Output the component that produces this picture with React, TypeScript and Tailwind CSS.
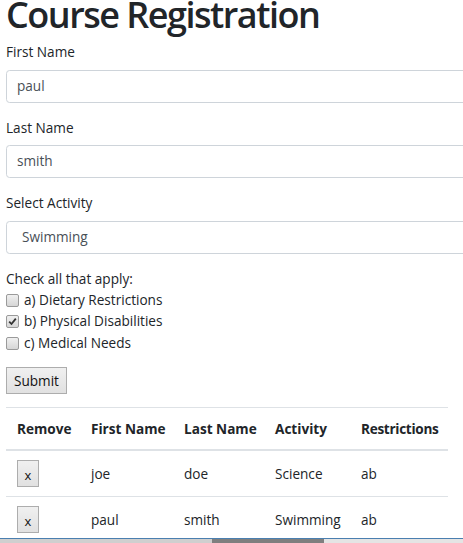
import React from 'react';

const rows = [
  { first: 'joe', last: 'doe', activity: 'Science', restrictions: 'ab' },
  { first: 'paul', last: 'smith', activity: 'Swimming', restrictions: 'ab' },
];

const options = [
  { label: 'a) Dietary Restrictions', checked: false },
  { label: 'b) Physical Disabilities', checked: true },
  { label: 'c) Medical Needs', checked: false },
];

function Box({ checked }: { checked: boolean }) {
  return (
    <span className="w-[13px] h-[13px] border border-[#9a9a9a] rounded-[2px] bg-gradient-to-b from-[#f0f0f0] to-[#d6d6d6] flex items-center justify-center shrink-0">
      {checked && (
        <svg width="9" height="9" viewBox="0 0 9 9">
          <path d="M1.2 4.6 L3.5 7 L7.8 1.6" fill="none" stroke="#333" strokeWidth="1.8" />
        </svg>
      )}
    </span>
  );
}

function Field({ label, value, select }: { label: string; value: string; select?: boolean }) {
  return (
    <div className="mb-[14px]">
      <div className="mb-[7px] leading-[21.6px]">{label}</div>
      <div
        className={
          'w-[520px] h-[33px] border border-[#ced4da] rounded-[3.6px] flex items-center text-[#495057] bg-white ' +
          (select ? 'pl-[15px]' : 'pl-[10px]')
        }
      >
        {value}
      </div>
    </div>
  );
}

export default function App() {
  return (
    <div
      className="relative w-[463px] h-[543px] overflow-hidden bg-white text-[#212529] text-[13.6px]"
      style={{ fontFamily: '"Open Sans", "Noto Sans", sans-serif' }}
    >
      <div className="pl-[6px]">
        <h1 className="text-[36px] font-semibold tracking-[-1.5px] leading-[43px] mt-[-7px] mb-[5px] whitespace-nowrap">
          Course Registration
        </h1>

        <Field label="First Name" value="paul" />
        <Field label="Last Name" value="smith" />
        <Field label="Select Activity" value="Swimming" select />

        <div className="mb-[13px]">
          <div className="leading-[21.6px]">Check all that apply:</div>
          {options.map(o => (
            <div key={o.label} className="flex items-center gap-[5px] h-[21.5px]">
              <Box checked={o.checked} />
              <span>{o.label}</span>
            </div>
          ))}
        </div>

        <button className="h-[27px] px-[7px] border border-[#adadad] bg-gradient-to-b from-[#f0f0f0] to-[#e1e1e1] text-[#111] leading-none mb-[13px]">
          Submit
        </button>

        <table className="w-[442px] table-fixed border-collapse text-left whitespace-nowrap">
          <thead>
            <tr className="border-t border-[#dee2e6] border-b-2">
              <th className="w-[74px] pl-[11px] py-[10px] font-bold leading-[21.6px]">Remove</th>
              <th className="w-[93px] pl-[11px] py-[10px] font-bold leading-[21.6px]">First Name</th>
              <th className="w-[91px] pl-[11px] py-[10px] font-bold leading-[21.6px]">Last Name</th>
              <th className="w-[86px] pl-[11px] py-[10px] font-bold leading-[21.6px]">Activity</th>
              <th className="pl-[11px] py-[10px] font-bold leading-[21.6px] tracking-[-0.3px]">Restrictions</th>
            </tr>
          </thead>
          <tbody>
            {rows.map(r => (
              <tr key={r.first} className="border-b border-[#dee2e6]">
                <td className="pl-[11px] py-[9px]">
                  <button className="w-[22px] h-[27px] border border-[#adadad] bg-gradient-to-b from-[#f0f0f0] to-[#e1e1e1] text-[13px] leading-none pt-[3px] text-[#111]">
                    x
                  </button>
                </td>
                <td className="pl-[11px]">{r.first}</td>
                <td className="pl-[11px]">{r.last}</td>
                <td className="pl-[11px]">{r.activity}</td>
                <td className="pl-[11px]">{r.restrictions}</td>
              </tr>
            ))}
          </tbody>
        </table>
      </div>

      <div className="absolute left-0 right-0 bottom-0 h-[5px] border-t border-[#4a7fb0] bg-[#d9d9d9] flex">
        <div className="w-[212px] bg-[#cfcfcf]" />
        <div className="w-[112px] bg-[#7f7f7f]" />
        <div className="flex-1 bg-[#e4e4e4]" />
      </div>
    </div>
  );
}
